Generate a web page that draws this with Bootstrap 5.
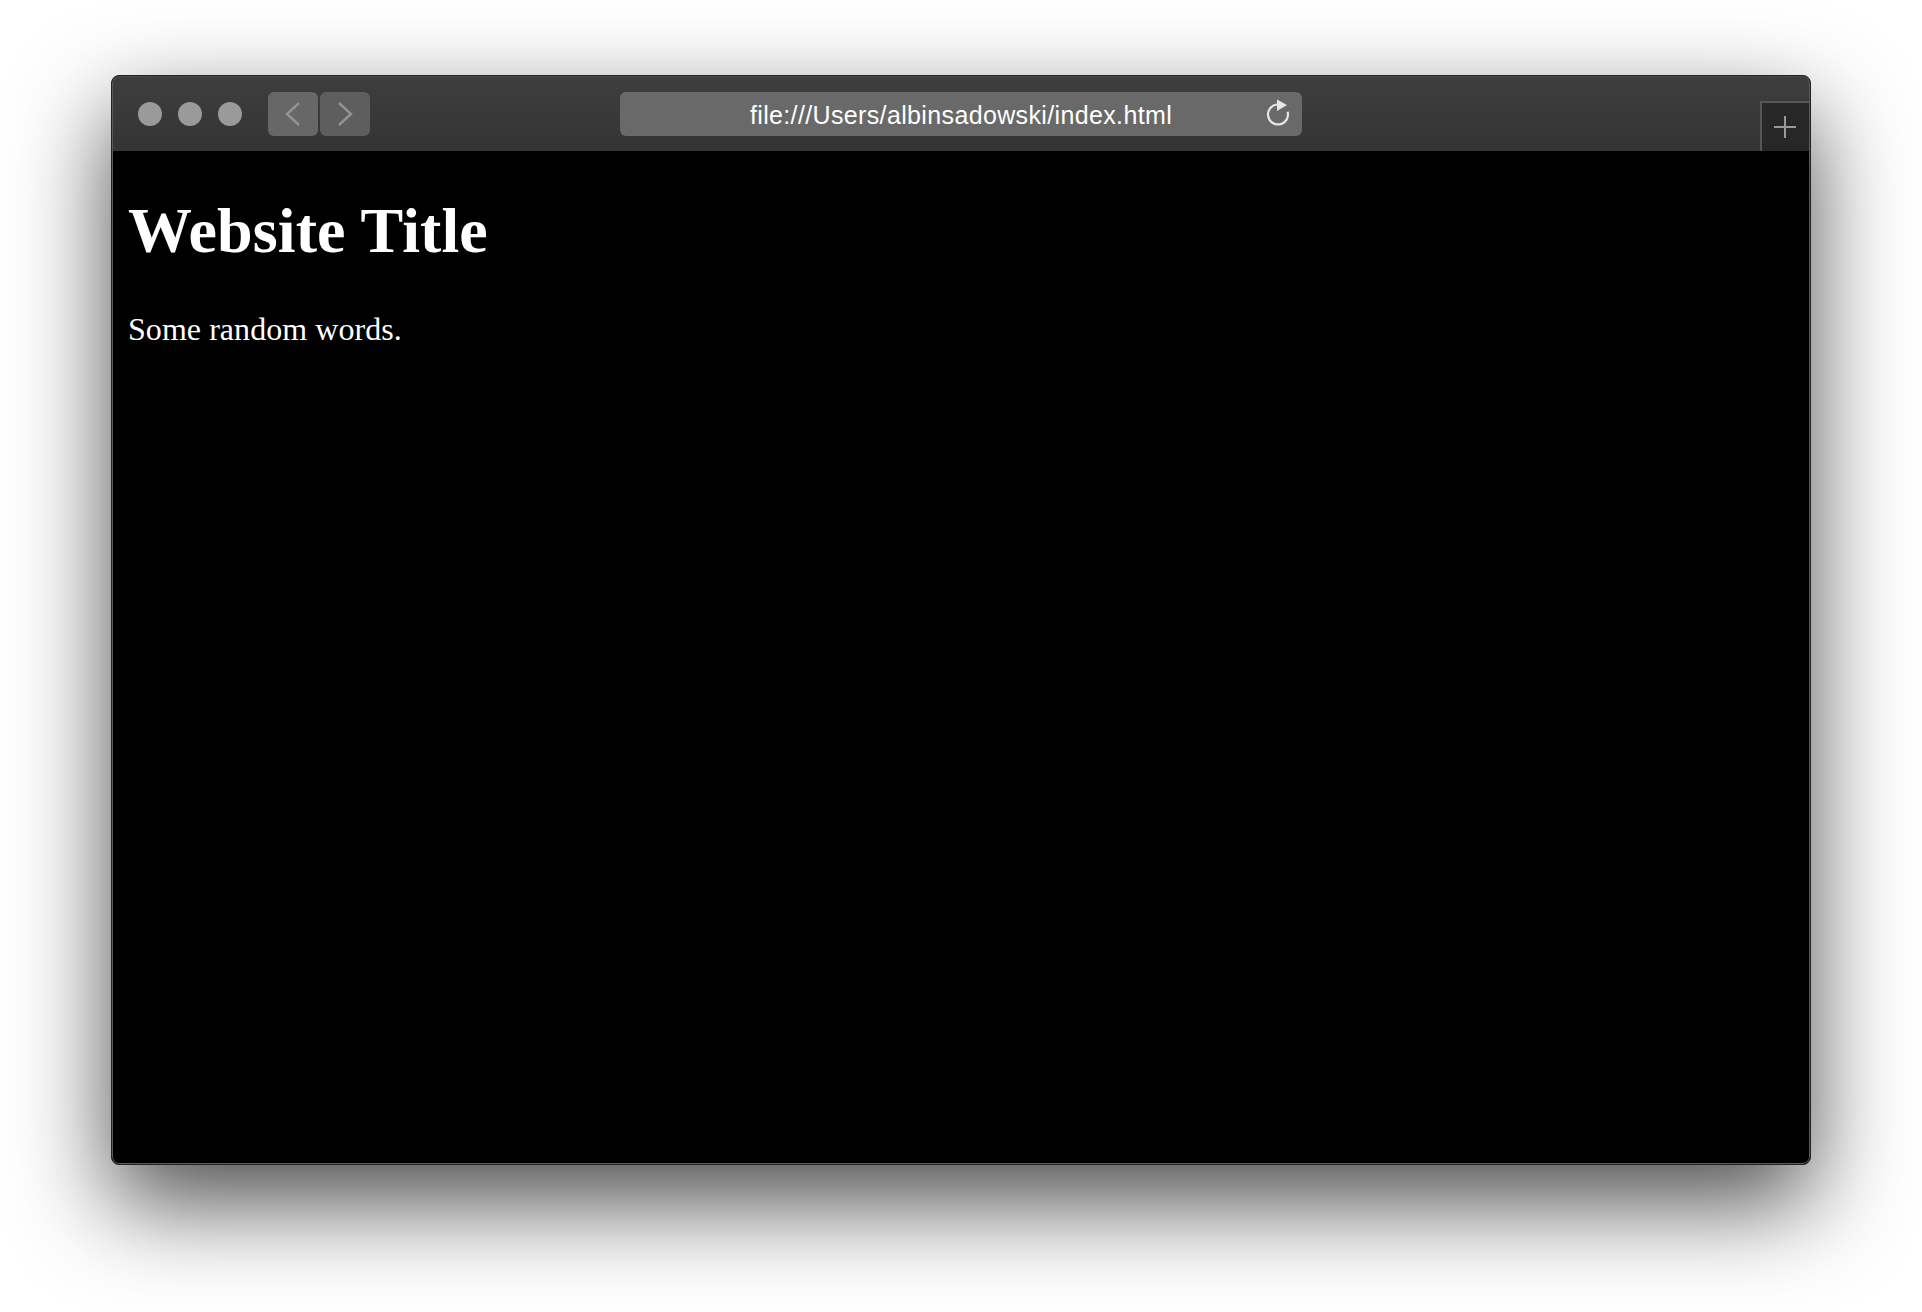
<!DOCTYPE html>
<html lang="en">
<head>
<meta charset="utf-8">
<title>Website Title</title>
<link href="https://cdn.jsdelivr.net/npm/bootstrap@5.3.0/dist/css/bootstrap.min.css" rel="stylesheet">
<style>
html, body { height: 100%; }
body { background: #fff; padding: 75px 111px 147px; overflow: hidden; }
.app-window { height: 1090px; background: #000; border-radius: 8px; overflow: hidden;
  border: 1px solid #222; box-shadow: 0 38px 96px rgba(0,0,0,.7); position: relative; }
.app-window::after { content: ""; position: absolute; inset: 0; border: 1.5px solid #5a5a5a; border-top-color: #484848; border-radius: 7px; pointer-events: none; }
.tool-strip { height: 75px; background: linear-gradient(#3e3e3e, #343434); padding-left: 26px; }
.light-dot { width: 24px; height: 24px; background: #9a9a9a; }
.dot-set { gap: 16px; margin-right: 26px; }
.nav-set { gap: 2px; }
.nav-key { width: 50px; height: 44px; background: #676767; border-radius: 6px; }
.nav-key + .nav-key { background: #5e5e5e; }
.addr-wrap { left: 508px; width: 682px; height: 44px; top: 16px; padding-top: 1px; background: #696969; border-radius: 6px; position: absolute; }
.addr-text { color: #fff; font: 400 25px/45px "Liberation Sans", sans-serif; letter-spacing: .36px; }
.reload-ico { right: 9px; top: 5px; position: absolute; }
.new-tab { right: 0; bottom: 0; width: 50px; height: 50px; padding-right: 2px; background: #272727; border-left: 2px solid #565656; border-top: 2px solid #565656; position: absolute; }
.page-area { color: #fff; font-family: "Liberation Serif", serif; padding: 0 16px; }
.page-title { font-size: 64px; font-weight: 700; line-height: 74px; letter-spacing: .1px; margin: 43px 0 0; }
.page-text { font-size: 32px; line-height: 37px; letter-spacing: .05px; margin: 43px 0 0; }
</style>
</head>
<body>
<div class="app-window d-flex flex-column">
  <div class="tool-strip d-flex align-items-center flex-shrink-0 position-relative">
    <div class="d-flex dot-set">
      <span class="light-dot rounded-circle"></span>
      <span class="light-dot rounded-circle"></span>
      <span class="light-dot rounded-circle"></span>
    </div>
    <div class="d-flex nav-set">
      <span class="nav-key d-flex align-items-center justify-content-center">
        <svg width="18" height="26" viewBox="0 0 18 26" fill="none" stroke="#939393" stroke-width="2.4"><path d="M15 2 3 13l12 11"/></svg>
      </span>
      <span class="nav-key d-flex align-items-center justify-content-center">
        <svg width="18" height="26" viewBox="0 0 18 26" fill="none" stroke="#939393" stroke-width="2.4"><path d="m3 2 12 11L3 24"/></svg>
      </span>
    </div>
    <div class="addr-wrap text-center">
      <span class="addr-text">file:///Users/albinsadowski/index.html</span>
      <svg class="reload-ico" width="30" height="32" viewBox="0 0 30 32" fill="none"><path d="M14 7.5A10 10 0 1 0 24.6 14.7" stroke="#e6e6e6" stroke-width="2.2"/><path d="M14 2.5 24 8l-10 6z" fill="#e6e6e6"/></svg>
    </div>
    <div class="new-tab d-flex align-items-center justify-content-center">
      <svg width="22" height="22" viewBox="0 0 22 22" stroke="#999" stroke-width="2"><path d="M11 0v22M0 11h22"/></svg>
    </div>
  </div>
  <main class="page-area flex-grow-1">
    <h1 class="page-title">Website Title</h1>
    <p class="page-text">Some random words.</p>
  </main>
</div>
<script src="https://cdn.jsdelivr.net/npm/bootstrap@5.3.0/dist/js/bootstrap.bundle.min.js"></script>
</body>
</html>
